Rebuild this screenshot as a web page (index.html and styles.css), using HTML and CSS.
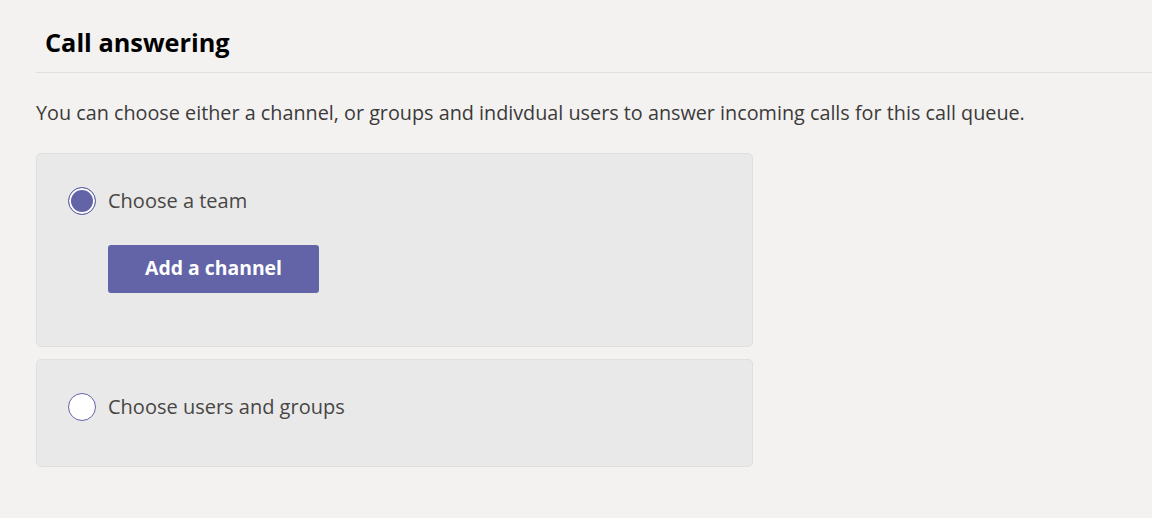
FILE: index.html
```html
<!DOCTYPE html>
<html>
<head>
<meta charset="utf-8">
<link rel="stylesheet" href="styles.css">
</head>
<body>
<div class="page">
  <h1 class="title">Call answering</h1>
  <div class="divider"></div>
  <p class="desc">You can choose either a channel, or groups and indivdual users to answer incoming calls for this call queue.</p>
  <div class="card card-team">
    <div class="option">
      <span class="radio checked"></span>
      <span class="label">Choose a team</span>
    </div>
    <button class="btn">Add a channel</button>
  </div>
  <div class="card card-users">
    <div class="option">
      <span class="radio"></span>
      <span class="label">Choose users and groups</span>
    </div>
  </div>
</div>
</body>
</html>
```
FILE: styles.css
```css
html, body {
  margin: 0;
  padding: 0;
  background: #f3f2f1;
}
body {
  font-family: "Open Sans", "Noto Sans", sans-serif;
  color: #252423;
}
.page {
  padding-left: 36px;
  padding-top: 24px;
}
.title {
  margin: 0;
  padding-left: 9px;
  font-size: 25.3px;
  font-weight: 700;
  line-height: 36px;
  color: #000;
}
.divider {
  margin-top: 12px;
  height: 1px;
  background: #e1dfdd;
}
.desc {
  margin: 26px 0 0 0;
  font-size: 19.8px;
  line-height: 28px;
  color: #3b3a39;
}
.card {
  width: 717px;
  box-sizing: border-box;
  background: #e9e9e9;
  border: 1px solid #e0dfde;
  border-radius: 5px;
  padding: 33px 0 0 31px;
}
.card-team { margin-top: 26px; height: 194px; }
.card-users { margin-top: 12px; height: 108px; }
.option {
  display: flex;
  align-items: center;
  gap: 12px;
  height: 28px;
}
.radio {
  width: 26px;
  height: 26px;
  border-radius: 50%;
  border: 1px solid #6264a7;
  background: #fff;
  box-sizing: content-box;
  flex: none;
}
.radio.checked {
  background: #6264a7;
  box-shadow: inset 0 0 0 2px #fff;
}
.label {
  font-size: 20px;
  line-height: 26px;
  color: #484644;
}
.btn {
  display: block;
  margin: 30px 0 0 40px;
  width: 211px;
  height: 48px;
  border: none;
  border-radius: 3px;
  background: #6264a7;
  color: #fff;
  font-family: inherit;
  font-size: 19.4px;
  font-weight: 700;
  padding: 0 0 3px 0;
}
```
